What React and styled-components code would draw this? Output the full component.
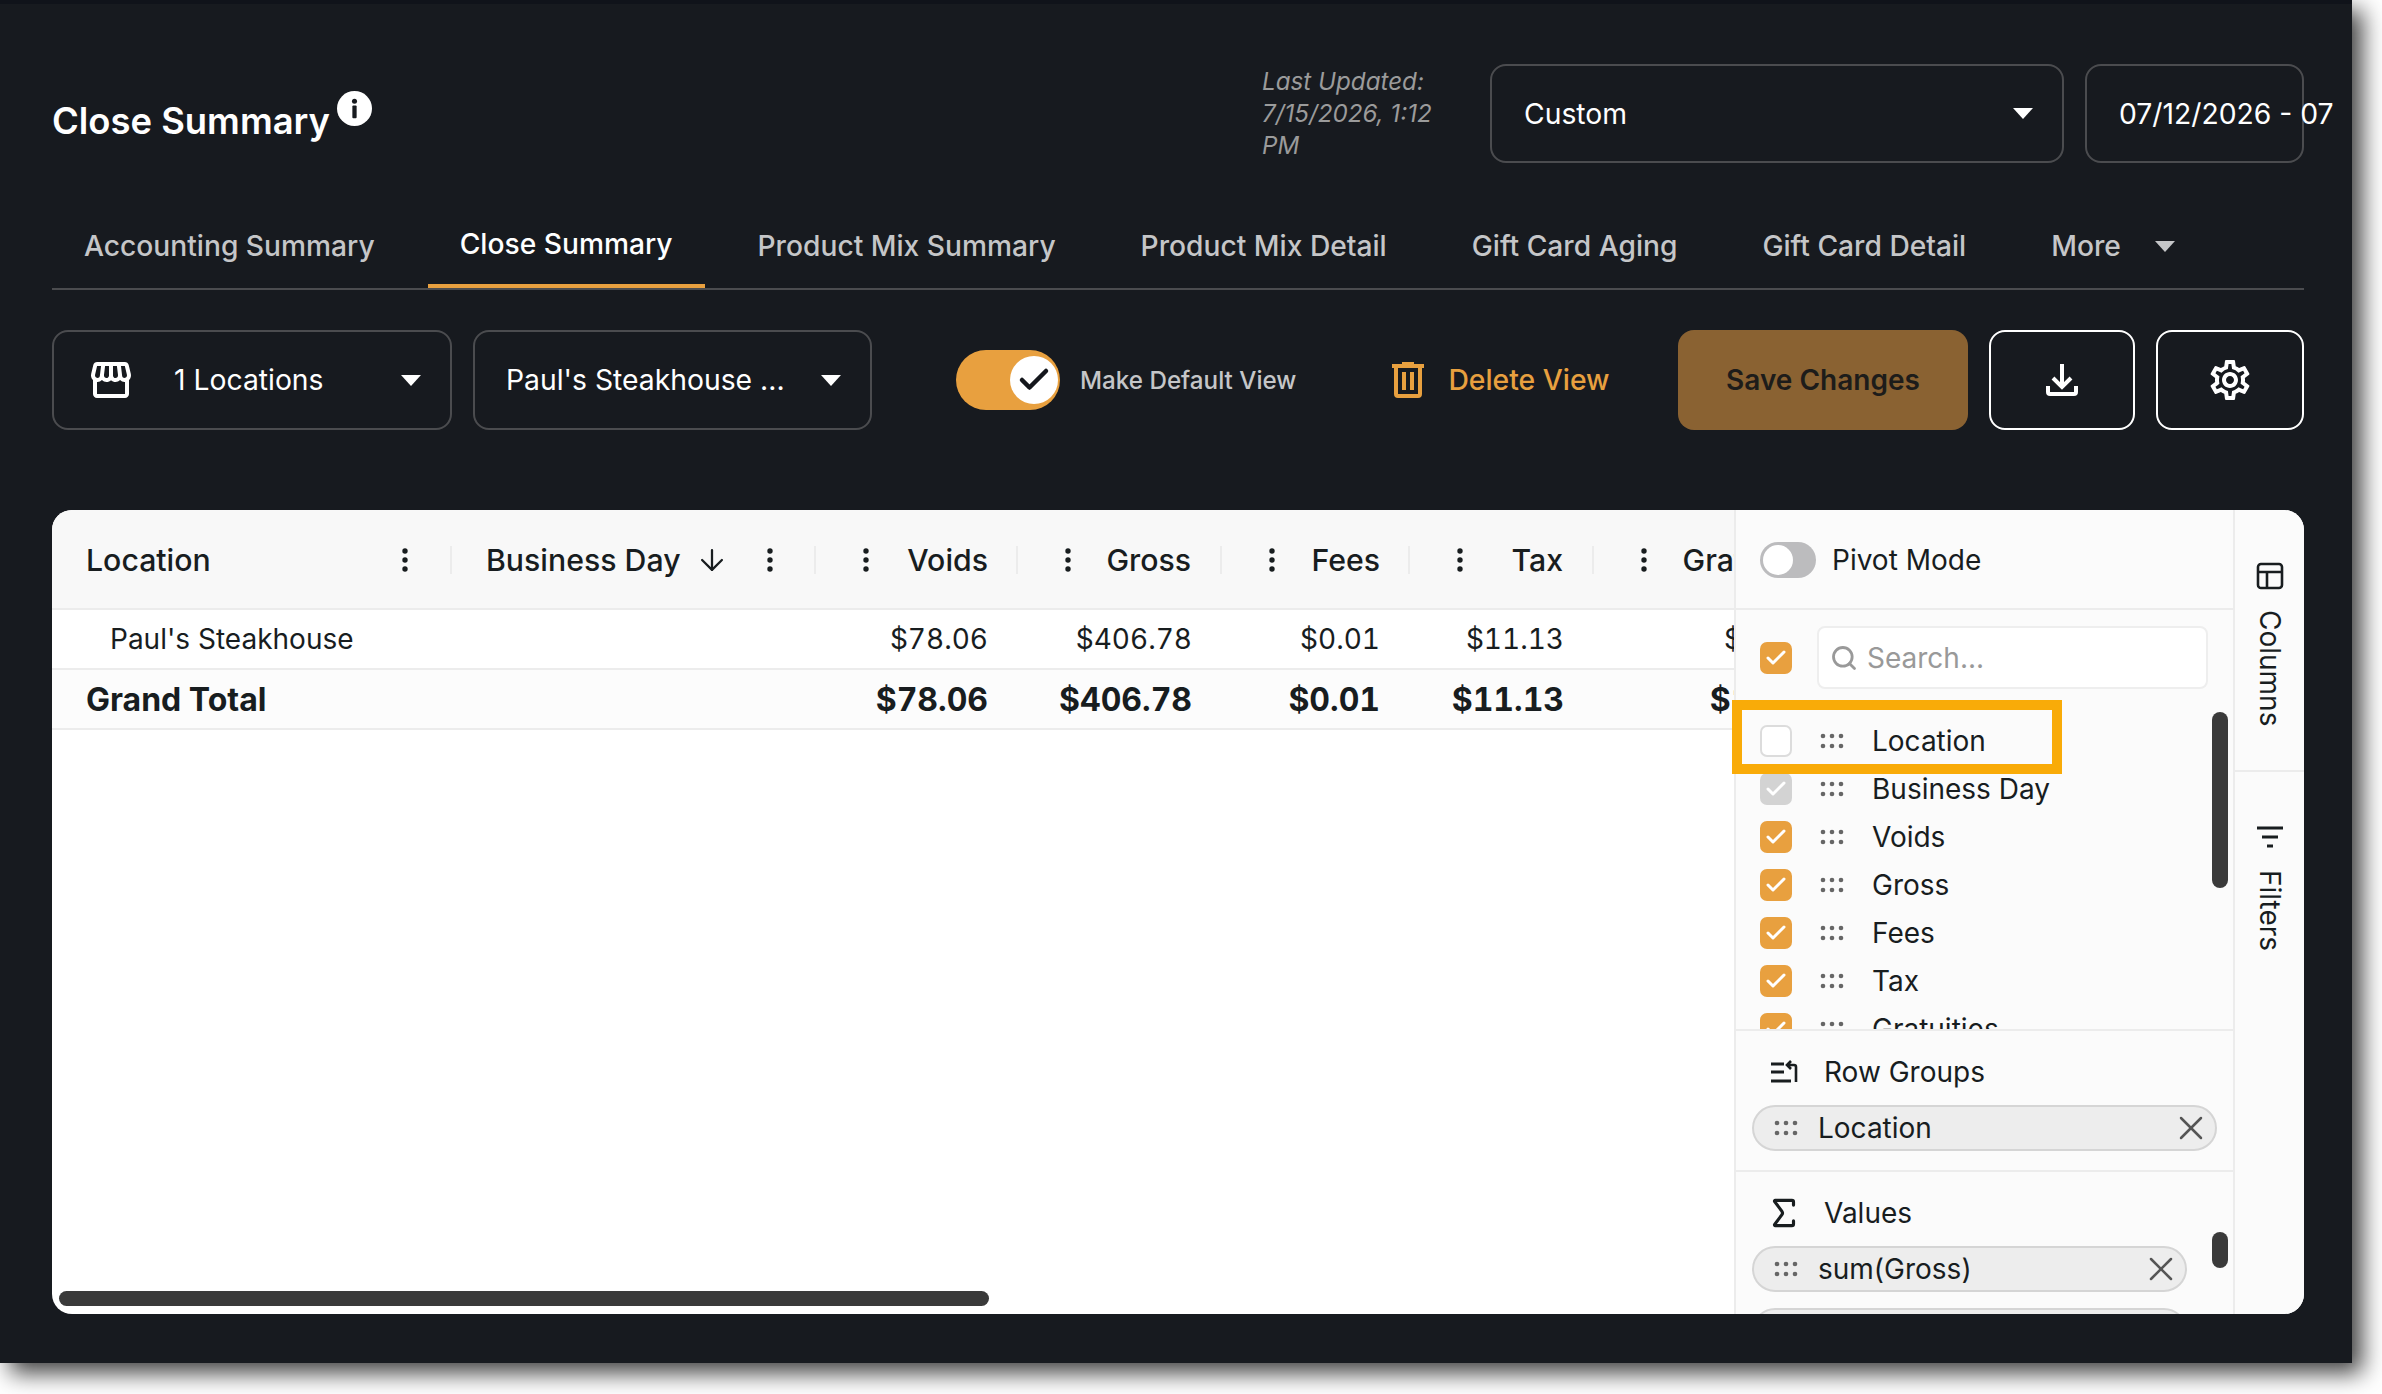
import React from 'react';
import styled, { createGlobalStyle } from 'styled-components';
import { Search, Sigma, X, ArrowDown, Check } from 'lucide-react';
import { MdOutlineSettings, MdOutlineStorefront } from 'react-icons/md';

const GlobalStyle = createGlobalStyle`
	html, body { margin: 0; padding: 0; background: #fff; }
	body { font-family: Inter, "Liberation Sans", sans-serif; }
	* { box-sizing: border-box; }
`;

const Page = styled.div`
	width: 2382px;
	height: 1394px;
	overflow: hidden;
	background: #fff;
`;

const Window = styled.div`
	width: 2352px;
	height: 1363px;
	padding: 64px 48px 49px 52px;
	background: #171a1f;
	border-top: 4px solid #10131a;
	box-shadow: 10px 10px 22px rgba(0, 0, 0, 0.75);
	color: #fff;
	display: flex;
	flex-direction: column;
`;

const Header = styled.div`
	height: 99px;
	margin-top: -4px;
	display: flex;
	align-items: center;
`;

const Title = styled.h1`
	margin: 15px 0 0;
	font-size: 36.4px;
	font-weight: 600;
	line-height: 44px;
`;

const InfoIcon = styled.svg`
	width: 35px;
	height: 35px;
	margin: -10px 0 0 7px;
`;

const LastUpdated = styled.div`
	width: 200px;
	margin-left: auto;
	margin-right: 28px;
	font-size: 24.2px;
	font-style: italic;
	line-height: 32px;
	color: #9b9b9b;
`;

const Select = styled.div`
	width: ${({ $w }) => $w}px;
	height: ${({ $h }) => $h || 99}px;
	flex: none;
	padding: 0 29px 0 32px;
	border: 2px solid #4b4c4f;
	border-radius: 16px;
	display: flex;
	align-items: center;
	justify-content: space-between;
	font-size: 28.3px;
	white-space: nowrap;
`;

const DateBox = styled(Select)`
	margin-left: 21px;
	justify-content: flex-start;
`;

const Caret = styled.span`
	width: 0;
	height: 0;
	flex: none;
	border-left: 10px solid transparent;
	border-right: 10px solid transparent;
	border-top: 11px solid ${({ $muted }) => ($muted ? '#c5c6c8' : '#fff')};
`;

const TabBar = styled.div`
	margin-top: 41px;
	height: 86px;
	display: flex;
	gap: 21px;
	border-bottom: 2px solid #4b4c4f;
`;

const Tab = styled.div`
	height: 84px;
	padding: 0 32px;
	display: flex;
	align-items: center;
	gap: 34px;
	font-size: 28.2px;
	font-weight: 500;
	color: ${({ $active }) => ($active ? '#fff' : '#c5c6c8')};
	border-bottom: ${({ $active }) => ($active ? '4px solid #e8a03f' : 'none')};
`;

const Toolbar = styled.div`
	margin-top: 40px;
	height: 100px;
	display: flex;
	align-items: center;
`;

const LocationText = styled.span`
	margin-left: 39px;
	margin-right: auto;
`;

const StoreIcon = styled(MdOutlineStorefront)`
	margin-left: 1px;
	flex: none;
`;

const ViewSelect = styled(Select)`
	margin-left: 21px;
	padding-left: 31px;
`;

const Toggle = styled.div`
	width: 104px;
	height: 60px;
	margin-left: 84px;
	padding-right: 2px;
	border-radius: 30px;
	background: #e8a03f;
	display: flex;
	align-items: center;
	justify-content: flex-end;
	flex: none;
`;

const Knob = styled.div`
	width: 48px;
	height: 48px;
	border-radius: 50%;
	background: #fff;
	color: #14171c;
	display: flex;
	align-items: center;
	justify-content: center;
`;

const ToggleLabel = styled.span`
	margin-left: 20px;
	font-size: 24.2px;
	font-weight: 500;
	color: #c5c6c8;
`;

const DeleteButton = styled.div`
	margin-left: 96px;
	display: flex;
	align-items: center;
	gap: 24px;
	font-size: 28.3px;
	font-weight: 500;
	color: #e8a03f;
`;

const SaveButton = styled.div`
	width: 290px;
	height: 100px;
	margin-left: auto;
	border-radius: 16px;
	background: #8a6232;
	color: #1d1c1a;
	font-size: 28px;
	font-weight: 600;
	display: flex;
	align-items: center;
	justify-content: center;
`;

const IconButton = styled.div`
	width: ${({ $w }) => $w}px;
	height: 100px;
	margin-left: 21px;
	border: 2px solid #fff;
	border-radius: 16px;
	display: flex;
	align-items: center;
	justify-content: center;
`;

const Panel = styled.div`
	position: relative;
	margin-top: 80px;
	height: 804px;
	display: flex;
	background: #fff;
	border-radius: 20px;
	overflow: hidden;
	color: #181d1f;
`;

const Grid = styled.div`
	flex: 1;
	min-width: 0;
	overflow: hidden;
`;

const columns = '400px 364px 202px 204px 188px 184px 258px';

const HeaderRow = styled.div`
	display: grid;
	grid-template-columns: ${columns};
	height: 100px;
	background: #f8f8f8;
	border-bottom: 2px solid #ececec;
`;

const HeaderCell = styled.div`
	display: flex;
	align-items: center;
	padding-left: ${({ $first }) => ($first ? '34px' : '0')};
	padding-top: 2px;
	font-size: 30.25px;
	font-weight: 500;
	white-space: nowrap;
`;

const MenuDots = styled.svg`
	width: 6px;
	height: 24px;
	flex: none;
	margin-left: ${({ $left }) => $left}px;
`;

const HeaderLabel = styled.span`
	margin-left: auto;
	margin-right: ${({ $right }) => $right}px;
`;

const HeaderLeft = styled.span`
	margin-right: auto;
`;

const SortArrow = styled(ArrowDown)`
	margin-right: 38px;
	flex: none;
`;

const Sep = styled.span`
	width: 2px;
	height: 28px;
	flex: none;
	margin-left: ${({ $left }) => $left || 0}px;
	background: #ececec;
`;

const BodyRow = styled.div`
	display: grid;
	grid-template-columns: ${columns};
	height: 60px;
	align-items: center;
	border-bottom: 2px solid #ececec;
	background: ${({ $total }) => ($total ? '#fcfcfc' : '#fff')};
	font-size: ${({ $total }) => ($total ? '32px' : '28px')};
	font-weight: ${({ $total }) => ($total ? 700 : 400)};
	white-space: nowrap;
`;

const NameCell = styled.div`
	padding-left: ${({ $indent }) => $indent}px;
	grid-column: span 2;
`;

const ValueCell = styled.div`
	text-align: right;
	padding-right: 30px;
	font-variant-numeric: tabular-nums;
`;

const HScroll = styled.div`
	position: absolute;
	left: 7px;
	bottom: 8px;
	width: 930px;
	height: 15px;
	border-radius: 8px;
	background: #3a3a3a;
`;

const ToolPanel = styled.div`
	position: relative;
	width: 501px;
	flex: none;
	display: flex;
	flex-direction: column;
	background: #fbfbfb;
	border-left: 2px solid #ececec;
	border-right: 2px solid #ececec;
	font-size: 28px;
`;

const PivotRow = styled.div`
	height: 100px;
	flex: none;
	padding: 2px 0 0 24px;
	border-bottom: 2px solid #ececec;
	display: flex;
	align-items: center;
	gap: 16px;
`;

const PivotToggle = styled.div`
	width: 56px;
	height: 36px;
	padding-left: 3px;
	border-radius: 18px;
	background: #bcbcbe;
	display: flex;
	align-items: center;
	&::before {
		content: '';
		width: 30px;
		height: 30px;
		border-radius: 50%;
		background: #fff;
	}
`;

const SearchRow = styled.div`
	flex: none;
	padding: 16px 25px 0 24px;
	display: flex;
	align-items: center;
	gap: 25px;
`;

const CheckBox = styled.div`
	width: 32px;
	height: 32px;
	flex: none;
	border-radius: 7px;
	display: flex;
	align-items: center;
	justify-content: center;
	color: #fff;
	background: ${({ $state }) => ($state === 'on' ? '#e8a03f' : $state === 'disabled' ? '#d3d3d3' : '#fff')};
	border: ${({ $state }) => ($state === 'off' ? '2px solid #dcdcdc' : 'none')};
`;

const SearchBox = styled.div`
	flex: 1;
	height: 63px;
	padding-left: 11px;
	border: 2px solid #eee;
	border-radius: 8px;
	background: #fff;
	color: #999;
	display: flex;
	align-items: center;
	gap: 9px;
`;

const ColumnList = styled.div`
	flex: none;
	height: 334px;
	margin-top: 8px;
	padding: 20px 0 0 24px;
	overflow: hidden;
	border-bottom: 2px solid #ececec;
`;

const ColumnRow = styled.div`
	height: 48px;
	display: flex;
	align-items: center;
	white-space: nowrap;
`;

const GripIcon = styled.svg`
	width: 24px;
	height: 16px;
	flex: none;
	margin: ${({ $m }) => $m || '0'};
`;

const Section = styled.div`
	flex: none;
	height: ${({ $h }) => $h}px;
	padding: 19px 0 0 16px;
	overflow: hidden;
	border-bottom: ${({ $last }) => ($last ? 'none' : '2px solid #ececec')};
`;

const SectionTitle = styled.div`
	height: 44px;
	display: flex;
	align-items: center;
`;

const SectionIcon = styled.span`
	width: 64px;
	margin-right: 8px;
	display: flex;
	justify-content: center;
`;

const Pill = styled.div`
	width: ${({ $w }) => $w}px;
	height: 46px;
	flex: none;
	margin-top: ${({ $top }) => $top}px;
	padding: 0 4px 0 20px;
	border: 2px solid #d5d5d5;
	border-radius: 23px;
	background: #ededed;
	display: flex;
	align-items: center;
`;

const PillText = styled.span`
	margin-right: auto;
`;

const VScroll = styled.div`
	position: absolute;
	left: 476px;
	top: ${({ $top }) => $top}px;
	width: 16px;
	height: ${({ $h }) => $h}px;
	border-radius: 8px;
	background: #3a3a3a;
`;

const Highlight = styled.div`
	position: absolute;
	left: -4px;
	top: 190px;
	width: 330px;
	height: 74px;
	border: 10px solid #f9ab08;
	z-index: 2;
`;

const SideTabs = styled.div`
	width: 69px;
	flex: none;
	background: #fbfbfb;
	display: flex;
	flex-direction: column;
	font-size: 28px;
`;

const SideTab = styled.div`
	height: ${({ $h }) => $h}px;
	padding-top: ${({ $pad }) => $pad}px;
	display: flex;
	flex-direction: column;
	align-items: center;
	gap: 20px;
	border-bottom: ${({ $line }) => ($line ? '2px solid #ececec' : 'none')};
`;

const SideLabel = styled.span`
	writing-mode: vertical-rl;
	line-height: 30px;
`;

const Grip = ({ m, color = '#666' }) => (
	<GripIcon $m={m} viewBox="0 0 24 16">
		{[3, 12, 21].map((x) => [3, 13].map((y) => (
			<circle key={`${x}-${y}`} cx={x} cy={y} r="2.3" fill={color} />
		)))}
	</GripIcon>
);

const Dots = ({ left = 0 }) => (
	<MenuDots $left={left} viewBox="0 0 6 24">
		<circle cx="3" cy="3" r="2.7" fill="#181d1f" />
		<circle cx="3" cy="12" r="2.7" fill="#181d1f" />
		<circle cx="3" cy="21" r="2.7" fill="#181d1f" />
	</MenuDots>
);

const tabs = ['Accounting Summary', 'Close Summary', 'Product Mix Summary', 'Product Mix Detail', 'Gift Card Aging', 'Gift Card Detail'];

const valueCols = [
	{ name: 'Voids', value: '$78.06', right: 28 },
	{ name: 'Gross', value: '$406.78', right: 29 },
	{ name: 'Fees', value: '$0.01', right: 28 },
	{ name: 'Tax', value: '$11.13', right: 29 },
	{ name: 'Gratuities', value: '$18.50', right: 28 },
];

const listRows = [
	['Location', 'off'],
	['Business Day', 'disabled'],
	['Voids', 'on'],
	['Gross', 'on'],
	['Fees', 'on'],
	['Tax', 'on'],
	['Gratuities', 'on'],
	['Net Sales', 'on'],
];

export default function App() {
	return (
		<Page>
			<GlobalStyle />
			<Window>
				<Header>
					<Title>Close Summary</Title>
					<InfoIcon viewBox="0 0 36 36">
						<circle cx="18" cy="18" r="18" fill="#fff" />
						<circle cx="18" cy="10.5" r="2.6" fill="#171a1f" />
						<rect x="15.8" y="15" width="4.4" height="13" rx="1" fill="#171a1f" />
					</InfoIcon>
					<LastUpdated>Last Updated: 7/15/2026, 1:12 PM</LastUpdated>
					<Select $w={574}>
						Custom
						<Caret />
					</Select>
					<DateBox $w={219}>07/12/2026 - 07</DateBox>
				</Header>

				<TabBar>
					{tabs.map((t) => (
						<Tab key={t} $active={t === 'Close Summary'}>{t}</Tab>
					))}
					<Tab>
						More
						<Caret $muted />
					</Tab>
				</TabBar>

				<Toolbar>
					<Select $w={400} $h={100}>
						<StoreIcon size={48} color="#fff" />
						<LocationText>1 Locations</LocationText>
						<Caret />
					</Select>
					<ViewSelect $w={399} $h={100}>
						Paul's Steakhouse ...
						<Caret />
					</ViewSelect>
					<Toggle>
						<Knob>
							<Check size={36} strokeWidth={3} />
						</Knob>
					</Toggle>
					<ToggleLabel>Make Default View</ToggleLabel>
					<DeleteButton>
						<svg width="32" height="36" viewBox="0 0 32 36" fill="#e8a03f">
							<rect x="10" y="0" width="12" height="2" />
							<rect x="0" y="2" width="32" height="4" />
							<path d="M4 6v26a2 2 0 0 0 2 2h20a2 2 0 0 0 2-2V6" fill="none" stroke="#e8a03f" strokeWidth="4" />
							<rect x="10" y="10" width="4" height="18" />
							<rect x="18" y="10" width="4" height="18" />
						</svg>
						Delete View
					</DeleteButton>
					<SaveButton>Save Changes</SaveButton>
					<IconButton $w={146}>
						<svg width="32" height="32" viewBox="0 0 32 32" fill="none" stroke="#fff" strokeWidth="4">
							<path d="M16 0v22M7 14l9 9 9-9" />
							<path d="M2 22v6a2 2 0 0 0 2 2h24a2 2 0 0 0 2-2v-6" />
						</svg>
					</IconButton>
					<IconButton $w={148}>
						<MdOutlineSettings size={48} color="#fff" />
					</IconButton>
				</Toolbar>

				<Panel>
					<Grid>
						<HeaderRow>
							<HeaderCell $first>
								<HeaderLeft>Location</HeaderLeft>
								<Dots />
								<Sep $left={42} />
							</HeaderCell>
							<HeaderCell $first>
								<HeaderLeft>Business Day</HeaderLeft>
								<SortArrow size={34} strokeWidth={1.6} />
								<Dots />
								<Sep $left={41} />
							</HeaderCell>
							{valueCols.map((c) => (
								<HeaderCell key={c.name}>
									<Dots left={47} />
									<HeaderLabel $right={c.right}>{c.name}</HeaderLabel>
									<Sep />
								</HeaderCell>
							))}
						</HeaderRow>
						<BodyRow>
							<NameCell $indent={58}>Paul's Steakhouse</NameCell>
							{valueCols.map((c) => <ValueCell key={c.name}>{c.value}</ValueCell>)}
						</BodyRow>
						<BodyRow $total>
							<NameCell $indent={34}>Grand Total</NameCell>
							{valueCols.map((c) => <ValueCell key={c.name}>{c.value}</ValueCell>)}
						</BodyRow>
					</Grid>
					<HScroll />

					<ToolPanel>
						<PivotRow>
							<PivotToggle />
							Pivot Mode
						</PivotRow>
						<SearchRow>
							<CheckBox $state="on"><Check size={24} strokeWidth={3} /></CheckBox>
							<SearchBox>
								<Search size={28} color="#999" strokeWidth={2.4} />
								Search...
							</SearchBox>
						</SearchRow>
						<ColumnList>
							{listRows.map(([name, state]) => (
								<ColumnRow key={name}>
									<CheckBox $state={state}>
										{state !== 'off' && <Check size={24} strokeWidth={3} />}
									</CheckBox>
									<Grip m="0 28px 0 28px" />
									{name}
								</ColumnRow>
							))}
						</ColumnList>
						<Section $h={141}>
							<SectionTitle>
								<SectionIcon>
									<svg width="28" height="24" viewBox="0 0 28 24" fill="none" stroke="#181d1f" strokeWidth="3">
										<path d="M1 4h13M1 12h13M1 21h20" />
										<path d="M26 22V7a2 2 0 0 0-2-2h-6M21 1l-4 4 4 4" strokeWidth="2.6" />
									</svg>
								</SectionIcon>
								Row Groups
							</SectionTitle>
							<Pill $w={465} $top={11}>
								<Grip m="0 20px 0 0" />
								<PillText>Location</PillText>
								<X size={40} color="#555" strokeWidth={1.5} />
							</Pill>
						</Section>
						<Section $last $h={142}>
							<SectionTitle>
								<SectionIcon>
									<Sigma size={38} strokeWidth={2} />
								</SectionIcon>
								Values
							</SectionTitle>
							<Pill $w={435} $top={11}>
								<Grip m="0 20px 0 0" />
								<PillText>sum(Gross)</PillText>
								<X size={40} color="#555" strokeWidth={1.5} />
							</Pill>
							<Pill $w={435} $top={16} />
						</Section>
						<VScroll $top={202} $h={176} />
						<VScroll $top={722} $h={36} />
						<Highlight />
					</ToolPanel>

					<SideTabs>
						<SideTab $h={262} $pad={52} $line>
							<svg width="28" height="28" viewBox="0 0 28 28" fill="none" stroke="#181d1f" strokeWidth="2.6">
								<rect x="2" y="2" width="24" height="24" rx="3" />
								<path d="M2 10h24M11 10v16" />
							</svg>
							<SideLabel>Columns</SideLabel>
						</SideTab>
						<SideTab $h={200} $pad={54}>
							<svg width="28" height="24" viewBox="0 0 28 24" fill="none" stroke="#181d1f" strokeWidth="3">
								<path d="M1 2h26M6 11h16M11 20h6" />
							</svg>
							<SideLabel>Filters</SideLabel>
						</SideTab>
					</SideTabs>
				</Panel>
			</Window>
		</Page>
	);
}
